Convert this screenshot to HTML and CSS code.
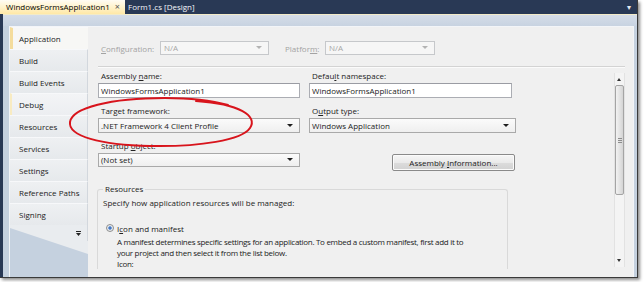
FILE: index.html
```html
<!DOCTYPE html>
<html lang="en">

<head>
  <meta charset="UTF-8">
  <title>WindowsFormsApplication1 - Properties</title>
  <link rel="stylesheet" href="styles.css">
</head>

<body>
  <div class="shot">
    <div class="doc-tabs">
      <div class="doc-tab active">WindowsFormsApplication1 <span class="close">×</span></div>
      <div class="doc-tab">Form1.cs [Design]</div>
      <span class="well-arrow">▾</span>
    </div>
    <div class="doc-strip"></div>

    <div class="frame">
      <div class="props">
        <div class="side">
          <ul class="tab-list">
            <li class="selected">Application</li>
            <li>Build</li>
            <li>Build Events</li>
            <li class="hot">Debug</li>
            <li>Resources</li>
            <li>Services</li>
            <li>Settings</li>
            <li>Reference Paths</li>
            <li>Signing</li>
            <li class="more">
              <svg width="5" height="5" viewBox="0 0 5 5">
                <rect x="0" y="0" width="5" height="1" fill="#222" />
                <path d="M0 2 H5 L2.5 5 Z" fill="#222" />
              </svg>
            </li>
          </ul>
        </div>

        <div class="main">
          <div class="config-row">
            <span class="cfg-label"><u>C</u>onfiguration:</span>
            <div class="combo disabled cfg-combo">N/A</div>
            <span class="cfg-label platform">Platfor<u>m</u>:</span>
            <div class="combo disabled plat-combo">N/A</div>
          </div>
          <hr class="sep">

          <div class="scroll-area">
            <div class="form">
              <div class="grid">
                <div class="field">
                  <label>Assembly <u>n</u>ame:</label>
                  <div class="textbox">WindowsFormsApplication1</div>
                </div>
                <div class="field">
                  <label>Defau<u>l</u>t namespace:</label>
                  <div class="textbox narrow">WindowsFormsApplication1</div>
                </div>
                <div class="field">
                  <label>Tar<u>g</u>et framework:</label>
                  <div class="combo">.NET Framework 4 Client Profile</div>
                </div>
                <div class="field">
                  <label>O<u>u</u>tput type:</label>
                  <div class="combo">Windows Application</div>
                </div>
                <div class="field">
                  <label>Startup <u>o</u>bject:</label>
                  <div class="combo short">(Not set)</div>
                </div>
                <div class="field btn-cell">
                  <button class="button">Assembly <u>I</u>nformation...</button>
                </div>
              </div>

              <fieldset class="group">
                <legend>Resources</legend>
                <p class="hint">Specify how application resources will be managed:</p>
                <div class="radio-row">
                  <span class="radio"></span>
                  <span>I<u>c</u>on and manifest</span>
                </div>
                <p class="desc">A manifest determines specific settings for an application. To embed a custom manifest, first add it to<br>your project and then select it from the list below.</p>
                <p class="desc">Icon:</p>
              </fieldset>
            </div>

            <div class="vscroll">
              <div class="arrow up"></div>
              <div class="thumb"><span class="grip"></span></div>
              <div class="track"></div>
              <div class="arrow down"></div>
            </div>
          </div>
        </div>
      </div>
    </div>

    <!-- hand drawn mark round the framework box -->
    <svg class="mark" width="644" height="282" viewBox="0 0 644 282">
      <path d="M196 101 C240 104 258 116 250 128 C242 140 200 147 150 146 C100 145 68 136 70 122 C72 108 110 98 165 98 C190 98 210 100 228 105"
        fill="none" stroke="#d8141c" stroke-width="2" stroke-linecap="round" />
    </svg>
  </div>
</body>

</html>
```

FILE: styles.css
```css
html,
body {
  margin: 0;
  padding: 0;
}

body {
  width: 644px;
  height: 282px;
  background: #fff;
  font-family: "Open Sans", "Noto Sans", sans-serif;
  font-size: 8px;
  color: #222;
  overflow: hidden;
}

.shot {
  position: relative;
  width: 637px;
  height: 277px;
  background: #293955;
  border-right: 1px solid #3a3a3a;
  border-bottom: 1px solid #3a3a3a;
  box-shadow: 2px 2px 3px rgba(0, 0, 0, 0.45);
}

/* document tabs */
.doc-tabs {
  display: flex;
  height: 14px;
  line-height: 14px;
}

.doc-tab {
  padding: 0 5px 0 3px;
  color: #f4f6fa;
}

.doc-tab.active {
  display: flex;
  justify-content: space-between;
  box-sizing: border-box;
  width: 125px;
  padding: 0 5px 0 6px;
  color: #000;
  background: linear-gradient(#fffcf4, #fff3cd 50%, #ffe8a6);
}

.close {
  color: #555;
  font-size: 9px;
}

.well-arrow {
  margin-left: auto;
  margin-right: 6px;
  color: #e6ebf2;
  font-size: 8px;
}

.doc-strip {
  height: 12px;
  margin-left: 3px;
  background: linear-gradient(#f3ebc8 0, #f3ebc8 1px, #d5dde8 1px, #c8d3e1);
}

/* property pages */
.frame {
  display: flex;
  height: 251px;
  margin-left: 3px;
  padding: 0 3px 0 6px;
  background: #c5d1df;
}

.props {
  flex: 1;
  display: flex;
  border: 1px solid #f3f5f8;
  border-bottom: 0;
}

.side {
  flex: none;
  width: 78px;
}

.tab-list {
  margin: 0;
  padding: 0;
  list-style: none;
  height: 227px;
  background: #e9ecef;
  clip-path: polygon(0 0, 100% 0, 100% 100%, 0 calc(100% - 26px));
}

.tab-list li {
  box-sizing: border-box;
  height: 22px;
  line-height: 21px;
  padding-left: 9px;
  border-top: 1px solid #f7f8fa;
  border-right: 1px solid #d2d7dd;
  background: linear-gradient(#eef0f2, #e6e9ec);
  white-space: nowrap;
}

.tab-list li.selected {
  padding-left: 6px;
  border-left: 3px solid #f4dc9c;
  border-right: 0;
  background: #f7f7f5;
}

.tab-list li.hot {
  padding-left: 7px;
  border-left: 2px solid #f8ebc2;
  background: linear-gradient(#f3f4f6, #eceef1);
}

.tab-list li.more {
  height: 16px;
  line-height: 0;
  padding: 6px 6px 0 0;
  text-align: right;
  border-top: 0;
  background: transparent;
}

.main {
  flex: 1;
  display: flex;
  flex-direction: column;
  padding: 14px 8px 0 10px;
  background: #f0f0f0;
}

.config-row {
  display: flex;
  align-items: center;
  height: 14px;
  padding-left: 3px;
}

.cfg-label {
  width: 59px;
  color: #a3a3a3;
}

.cfg-label.platform {
  width: 40px;
  margin-left: 16px;
}

.sep {
  height: 0;
  margin: 11px 0 0;
  border: 0;
  border-top: 1px solid #d3d3d3;
  border-bottom: 1px solid #fbfbfb;
}

.scroll-area {
  flex: 1;
  display: flex;
  padding-top: 2px;
}

.form {
  flex: 1;
}

.grid {
  display: grid;
  grid-template-columns: 202px 207px;
  column-gap: 9px;
  row-gap: 7px;
}

.field label {
  display: block;
  height: 12px;
  line-height: 12px;
  padding-left: 3px;
  margin-bottom: 1px;
}

.textbox,
.combo {
  box-sizing: border-box;
  height: 15px;
  line-height: 13px;
  padding: 0 2px;
  border: 1px solid #abadb3;
  border-top-color: #9a9ca3;
  background: #fff;
  white-space: nowrap;
}

.textbox.narrow {
  width: 203px;
}

.combo {
  position: relative;
  border-color: #a9a9a9;
  background: linear-gradient(#fbfbfb, #efefef);
}

.combo.short {
  height: 14px;
  line-height: 12px;
}

.combo::after {
  content: '';
  position: absolute;
  right: 6px;
  top: 5px;
  border-left: 3px solid transparent;
  border-right: 3px solid transparent;
  border-top: 3px solid #1e1e1e;
}

.combo.short::after {
  top: 4px;
}

.combo.disabled {
  height: 14px;
  line-height: 12px;
  padding: 0 3px;
  color: #a6a6a6;
  border-color: #c6c8cb;
  background: #f6f6f6;
}

.combo.disabled::after {
  top: 4px;
  border-top-color: #b3b3b3;
}

.cfg-combo {
  width: 109px;
}

.plat-combo {
  width: 110px;
}

.btn-cell {
  display: flex;
  justify-content: flex-end;
  align-items: flex-start;
  padding-right: 1px;
}

.button {
  box-sizing: border-box;
  width: 123px;
  height: 17px;
  margin-top: 14px;
  padding: 0;
  font: inherit;
  color: #222;
  border: 1px solid #8a8a8a;
  border-radius: 2px;
  background: linear-gradient(#f6f6f6, #eaeaea 50%, #dcdcdc 51%, #d2d2d2);
  box-shadow: inset 0 0 0 1px #fbfbfb;
}

.group {
  box-sizing: border-box;
  width: 411px;
  margin: 12px 0 0 -1px;
  padding: 0 5px;
  border: 1px solid #d9d9d9;
  border-bottom: 0;
  border-radius: 3px 3px 0 0;
  min-inline-size: 0;
}

.group legend {
  padding: 0 2px;
  line-height: 12px;
}

.hint {
  margin: 2px 0 0;
  line-height: 12px;
}

.radio-row {
  display: flex;
  align-items: center;
  gap: 3px;
  height: 12px;
  margin-top: 13px;
  padding-left: 3px;
}

.radio {
  box-sizing: border-box;
  width: 8px;
  height: 8px;
  border: 1px solid #8e8f8f;
  border-radius: 50%;
  background: radial-gradient(circle, #2a58a8 0, #6d9ad8 1.5px, #eef0f2 2.2px, #dcdcdc);
}

.desc {
  margin: 0;
  padding-left: 14px;
  line-height: 11px;
  letter-spacing: -0.3px;
  white-space: nowrap;
}

.radio-row + .desc {
  margin-top: 2px;
}

/* scroll bar */
.vscroll {
  flex: none;
  display: flex;
  flex-direction: column;
  width: 9px;
  margin: 3px 0 10px;
  border-left: 1px solid #e2e2e2;
  border-right: 1px solid #e2e2e2;
  background: #f4f4f4;
}

.arrow {
  position: relative;
  height: 12px;
}

.arrow::after {
  content: '';
  position: absolute;
  left: 2px;
  border-left: 2.5px solid transparent;
  border-right: 2.5px solid transparent;
}

.arrow.up::after {
  top: 5px;
  border-bottom: 3px solid #333;
}

.arrow.down::after {
  top: 4px;
  border-top: 3px solid #333;
}

.thumb {
  position: relative;
  box-sizing: border-box;
  height: 110px;
  border: 1px solid #a4a4a4;
  border-radius: 2px;
  background: linear-gradient(90deg, #f2f2f2, #e2e2e2 55%, #d4d4d4);
}

.grip {
  position: absolute;
  left: 2px;
  top: 52px;
  width: 4px;
  height: 5px;
  background: repeating-linear-gradient(#8d8d8d 0, #8d8d8d 1px, transparent 1px, transparent 2px);
}

.track {
  flex: 1;
}

.mark {
  position: absolute;
  left: 0;
  top: 0;
  pointer-events: none;
}
```
